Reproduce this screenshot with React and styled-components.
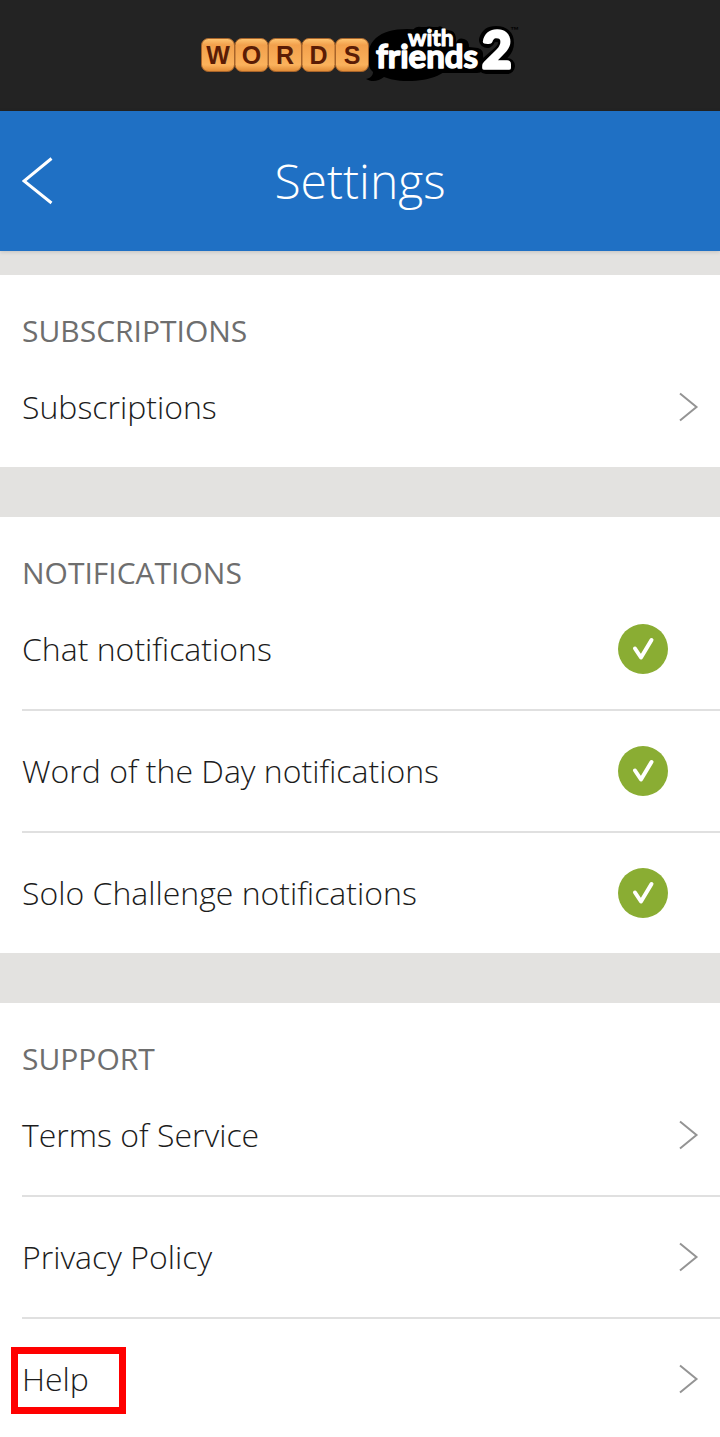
import React, { useState } from "react";
import styled, { createGlobalStyle } from "styled-components";

const notificationItems = [
    { id: "chat", label: "Chat notifications" },
    { id: "word", label: "Word of the Day notifications" },
    { id: "solo", label: "Solo Challenge notifications" },
];

const tiles = ["W", "O", "R", "D", "S"];

function Logo() {
    return (
        <svg
            width="320"
            height="91"
            viewBox="0 -16 320 91"
            role="img"
            aria-label="Words with Friends 2"
        >
            <defs>
                <linearGradient id="tile" x1="0" y1="0" x2="0" y2="1">
                    <stop offset="0" stopColor="#ffc673" />
                    <stop offset="0.2" stopColor="#f2a04c" />
                    <stop offset="0.8" stopColor="#fbb25c" />
                    <stop offset="1" stopColor="#e08a35" />
                </linearGradient>
            </defs>
            {/* speech bubble and the black edge round the words */}
            <path
                d="M169 39C164 15 180 3 207 3C240 3 254 18 252 34C250 48 230 55 208 55C196 55 190 53 184 51C178 56 171 56 166 53C171 52 173 49 173 46C171 44 169 42 169 39Z"
                fill="#000"
            />
            <path
                d="M205 7Q205 4 208 4L213 4Q216 0 221 1L226 1Q229 0 233 1L238 1Q241 -1 244 3L252 5Q256 7 256 14L256 17Q258 11 264 13Q269 14 269 21L278 22Q284 24 283 30L285 40Q284 47 277 47L180 47Q172 47 172 40L172 26Q174 12 186 13L205 13Z"
                fill="#000"
            />
            <path
                d="M287 14Q289 8 296 8Q306 8 306 17Q306 23 300 28L286 40H307"
                fill="none"
                stroke="#000"
                strokeWidth="16"
                strokeLinecap="round"
                strokeLinejoin="round"
            />
            {tiles.map((letter, i) => (
                <g key={letter} transform={`translate(${1 + i * 33.5} 12)`}>
                    <rect
                        x="0.5"
                        y="0.5"
                        width="33"
                        height="33"
                        rx="7"
                        fill="url(#tile)"
                        stroke="#a8642a"
                    />
                    <text
                        x="17"
                        y="26"
                        textAnchor="middle"
                        fontFamily="Liberation Sans, sans-serif"
                        fontWeight="700"
                        fontSize="25"
                        fill="#5a1c05"
                    >
                        {letter}
                    </text>
                </g>
            ))}
            <g
                fontFamily="Lato, sans-serif"
                fontWeight="700"
                fill="#fff"
                stroke="#fff"
                strokeLinejoin="round"
            >
                <text x="208" y="20" fontSize="23" strokeWidth="1">
                    with
                </text>
                <text x="176" y="42" fontSize="33" strokeWidth="1.5">
                    friends
                </text>
                <text x="282" y="42" fontSize="51" strokeWidth="3.5">
                    2
                </text>
            </g>
            <text
                x="310"
                y="7"
                fontFamily="Liberation Sans, sans-serif"
                fontWeight="700"
                fontSize="9"
                fill="#000"
            >
                ™
            </text>
        </svg>
    );
}

function Chevron() {
    return (
        <svg width="20" height="30" viewBox="0 0 20 30" aria-hidden="true">
            <path
                d="M1 1.5L17.5 15L1 28.5"
                fill="none"
                stroke="#949494"
                strokeWidth="2"
            />
        </svg>
    );
}

function LinkItem({ label, marked }) {
    return (
        <Row>
            <RowLink href="#">
                <RowText>
                    {label}
                    {marked && <Marker />}
                </RowText>
                <Chevron />
            </RowLink>
        </Row>
    );
}

function CheckItem({ id, label }) {
    const [checked, setChecked] = useState(true);

    return (
        <Row>
            <RowLabel htmlFor={id}>
                <RowText>{label}</RowText>
                <CheckBox>
                    <input
                        id={id}
                        type="checkbox"
                        checked={checked}
                        onChange={() => setChecked(!checked)}
                    />
                    {checked && (
                        <svg width="50" height="50" viewBox="0 0 50 50">
                            <path
                                d="M17 24.5L23 33.5L33.5 16"
                                fill="none"
                                stroke="#fff"
                                strokeWidth="4"
                                strokeLinecap="round"
                                strokeLinejoin="round"
                            />
                        </svg>
                    )}
                </CheckBox>
            </RowLabel>
        </Row>
    );
}

function App() {
    return (
        <>
            <GlobalStyle />
            <Banner>
                <Logo />
            </Banner>
            <TitleBar>
                <BackButton aria-label="Back">
                    <svg width="32" height="48" viewBox="0 0 32 48">
                        <path
                            d="M29.5 1.5L2 24L29.5 46"
                            fill="none"
                            stroke="#fff"
                            strokeWidth="3"
                        />
                    </svg>
                </BackButton>
                <h1>Settings</h1>
            </TitleBar>
            <Content>
                <Section>
                    <h2>SUBSCRIPTIONS</h2>
                    <ul>
                        <LinkItem label="Subscriptions" />
                    </ul>
                </Section>
                <Section>
                    <h2>NOTIFICATIONS</h2>
                    <ul>
                        {notificationItems.map((item) => (
                            <CheckItem key={item.id} {...item} />
                        ))}
                    </ul>
                </Section>
                <Section>
                    <h2>SUPPORT</h2>
                    <ul>
                        <LinkItem label="Terms of Service" />
                        <LinkItem label="Privacy Policy" />
                        <LinkItem label="Help" marked />
                    </ul>
                </Section>
            </Content>
        </>
    );
}

export default App;

const GlobalStyle = createGlobalStyle`
    * {
        box-sizing: border-box;
    }

    body {
        margin: 0;
        background-color: #fff;
        font-family: "Open Sans", "Noto Sans", sans-serif;
    }

    h1, h2, ul {
        margin: 0;
        padding: 0;
    }

    svg {
        display: block;
    }
`;

const Banner = styled.header`
    display: flex;
    justify-content: center;
    padding: 10px 0;
    background-color: #232323;
`;

const TitleBar = styled.div`
    display: grid;
    grid-template-columns: 1fr auto 1fr;
    align-items: center;
    height: 140px;
    padding: 0 22px;
    position: relative;
    color: #fff;
    background-color: #1f70c4;
    box-shadow: 0 1px 4px rgba(0, 0, 0, 0.15);

    & h1 {
        font-size: 48px;
        font-weight: 340;
        line-height: 64px;
    }
`;

const BackButton = styled.button`
    justify-self: start;
    padding: 0;
    border: none;
    background: none;
    cursor: pointer;
`;

const Content = styled.main`
    display: flex;
    flex-direction: column;
    row-gap: 50px;
    padding-top: 24px;
    background-color: #e3e2e0;
`;

const Section = styled.section`
    background-color: #fff;

    & h2 {
        padding: 40px 22px 0;
        color: #6e6e6e;
        font-size: 30px;
        font-weight: 400;
        line-height: 32px;
    }

    & ul {
        padding-left: 22px;
        list-style: none;
    }
`;

const Row = styled.li`
    & + & {
        border-top: 2px solid #e0e0e0;
    }
`;

const RowLink = styled.a`
    display: flex;
    align-items: center;
    justify-content: space-between;
    height: 120px;
    padding-right: 21px;
    color: #1c1c1c;
    text-decoration: none;
`;

const RowLabel = styled.label`
    display: flex;
    align-items: center;
    justify-content: space-between;
    height: 120px;
    padding-right: 52px;
    color: #1c1c1c;
    cursor: pointer;
`;

const RowText = styled.span`
    position: relative;
    font-size: 32px;
    font-weight: 320;
    line-height: 40px;
`;

const Marker = styled.span`
    position: absolute;
    top: -12px;
    left: -11px;
    width: 115px;
    height: 67px;
    border: 7px solid #f00;
`;

const CheckBox = styled.span`
    position: relative;
    width: 50px;
    height: 50px;

    & input {
        appearance: none;
        display: block;
        width: 50px;
        height: 50px;
        margin: 0;
        border-radius: 50%;
        background-color: #c4c4c4;
        cursor: pointer;
    }

    & input:checked {
        background-color: #8aad33;
    }

    & svg {
        position: absolute;
        inset: 0;
        pointer-events: none;
    }
`;
